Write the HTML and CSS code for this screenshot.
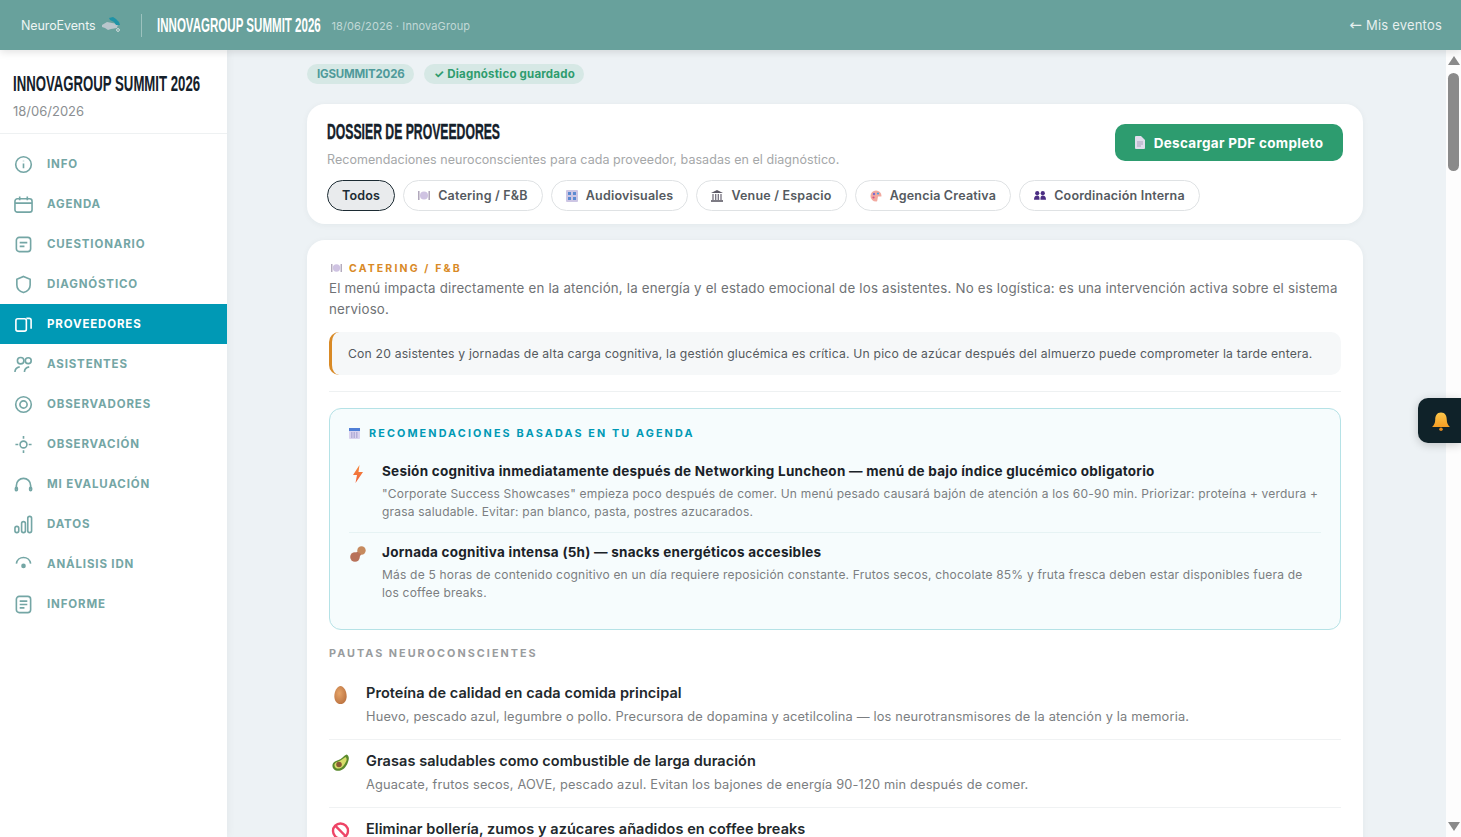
FILE: index.html
```html
<!DOCTYPE html>
<html>
<head>
  <meta charset="utf-8">
  <title>Dossier de proveedores</title>
  <link rel="stylesheet" href="styles.css">
</head>
<body>

  <!-- Top bar -->
  <header class="topbar">
    <div class="logo">
      <span class="logo-text">NeuroEvents</span>
      <svg class="logo-mark" width="20" height="16" viewBox="0 0 20 16"><path d="M1 8l5-3 5 1 6 1-1 4-6 1-3 1-3-2-3-1z" fill="#b9c6cc"/><path d="M8 1l4-1 3 2 3 3 1 3-4 0-2-3-4-2z" fill="#1f93a6"/><circle cx="17" cy="13" r="1.4" fill="none" stroke="#d5dfe0"/></svg>
    </div>
    <div class="topbar-sep"></div>
    <div class="topbar-title"><span>INNOVAGROUP SUMMIT 2026</span></div>
    <div class="topbar-sub">18/06/2026 · InnovaGroup</div>
    <a class="back-link"><span class="back-arrow">←</span> Mis eventos</a>
  </header>

  <div class="layout">
    <!-- Sidebar -->
    <aside class="sidebar">
      <div class="side-head">
        <div class="side-title"><span>INNOVAGROUP SUMMIT 2026</span></div>
        <div class="side-date">18/06/2026</div>
      </div>
      <nav>
        <a class="nav-item"><svg viewBox="0 0 20 20"><circle cx="10" cy="10" r="8.200"/><path d="M10 9v5M10 6v.6"/></svg>INFO</a>
        <a class="nav-item"><svg viewBox="0 0 20 20"><rect x="1" y="4" width="18" height="14" rx="2.500"/><path d="M1 8.500h18M6 1.500v4M14 1.500v4"/></svg>AGENDA</a>
        <a class="nav-item"><svg viewBox="0 0 20 20"><rect x="2.500" y="2.500" width="15" height="15" rx="3"/><path d="M6 8h8M6 12h5"/></svg>CUESTIONARIO</a>
        <a class="nav-item"><svg viewBox="0 0 20 20"><path d="M10 1.500l7 3v6c0 4-3 6.800-7 8-4-1.200-7-4-7-8v-6z"/></svg>DIAGNÓSTICO</a>
        <a class="nav-item active"><svg viewBox="0 0 20 20"><rect x="2" y="4" width="11" height="13" rx="2"/><path d="M13 3.500h3a2 2 0 0 1 2 2v9"/></svg>PROVEEDORES</a>
        <a class="nav-item"><svg viewBox="0 0 20 20"><circle cx="7" cy="6" r="3.400"/><circle cx="15" cy="6" r="3.100"/><path d="M1 18c0-3 2-5 5-5.500M11 18c0-3 1.500-5 5-5.500"/></svg>ASISTENTES</a>
        <a class="nav-item"><svg viewBox="0 0 20 20"><circle cx="10" cy="10" r="8.200"/><circle cx="10" cy="10" r="3.800"/></svg>OBSERVADORES</a>
        <a class="nav-item"><svg viewBox="0 0 20 20"><circle cx="10" cy="10" r="3.600"/><path d="M10 1v3M10 16v3M1.500 10h3M15.500 10h3"/></svg>OBSERVACIÓN</a>
        <a class="nav-item"><svg viewBox="0 0 20 20"><path d="M2.500 15v-4a7.500 7.500 0 0 1 15 0v4"/><rect x="1.500" y="13" width="2" height="3.500" rx="1"/><rect x="16.500" y="13" width="2" height="3.500" rx="1"/></svg>MI EVALUACIÓN</a>
        <a class="nav-item"><svg viewBox="0 0 20 20"><rect x="1" y="12" width="4" height="6.500" rx="2"/><rect x="8" y="7" width="4" height="11.500" rx="2"/><rect x="14.500" y="1.500" width="4" height="17" rx="2"/></svg>DATOS</a>
        <a class="nav-item"><svg viewBox="0 0 20 20"><path d="M2.500 9A7.600 7.600 0 0 1 17.500 9"/><circle class="dot" cx="10" cy="11.500" r="1.600"/></svg>ANÁLISIS IDN</a>
        <a class="nav-item"><svg viewBox="0 0 20 20"><rect x="2.500" y="1.500" width="15" height="17" rx="3"/><path d="M6 6.500h8M6 10h8M6 13.500h5"/></svg>INFORME</a>
      </nav>
    </aside>

    <!-- Main -->
    <main class="main">
      <div class="content">
        <div class="badges">
          <span class="badge code">IGSUMMIT2026</span>
          <span class="badge ok">✓ Diagnóstico guardado</span>
        </div>

        <section class="card head-card">
          <div class="head-row">
            <div>
              <h1><span>DOSSIER DE PROVEEDORES</span></h1>
              <p class="head-sub">Recomendaciones neuroconscientes para cada proveedor, basadas en el diagnóstico.</p>
            </div>
            <button class="pdf-btn">
              <svg width="10" height="13" viewBox="0 0 10 13"><path d="M0 1a1 1 0 0 1 1-1h5l4 4v8a1 1 0 0 1-1 1H1a1 1 0 0 1-1-1z" fill="#e0dcec"/><path d="M2 6h6M2 8h6M2 10h4" stroke="#a9a2bd"/></svg>
              Descargar PDF completo
            </button>
          </div>
          <div class="tabs">
            <button class="tab selected">Todos</button>
            <button class="tab"><svg width="12" height="11" viewBox="0 0 12 11"><circle cx="6" cy="5.500" r="4" fill="#cfc3e2"/><path d="M.8 1v9M11.200 1v9" stroke="#a99fb5" stroke-width="1.400"/></svg>Catering / F&amp;B</button>
            <button class="tab"><svg width="12" height="12" viewBox="0 0 12 12"><rect width="12" height="12" rx="1" fill="#cdc6e4"/><rect x="2" y="2" width="3" height="3" fill="#5c8ad1"/><rect x="7" y="2" width="3" height="3" fill="#5c8ad1"/><rect x="2" y="7" width="3" height="3" fill="#5c8ad1"/><rect x="7" y="7" width="3" height="3" fill="#5c8ad1"/></svg>Audiovisuales</button>
            <button class="tab"><svg width="12" height="12" viewBox="0 0 12 12"><path d="M6 0l6 3H0z" fill="#5d5a66"/><path d="M2 4v6M4.700 4v6M7.300 4v6M10 4v6" stroke="#76727f" stroke-width="1.300"/><path d="M0 11h12" stroke="#5d5a66" stroke-width="1.600"/></svg>Venue / Espacio</button>
            <button class="tab"><svg width="12" height="12" viewBox="0 0 12 12"><circle cx="6" cy="6" r="5.500" fill="#f2aaa0"/><circle cx="4" cy="4" r="1.200" fill="#7b6bd0"/><circle cx="3.500" cy="7.500" r="1.100" fill="#d94f82"/><circle cx="8" cy="3.500" r="1.100" fill="#4aa3df"/><path d="M8 6.500h4V12H7z" fill="#fff"/></svg>Agencia Creativa</button>
            <button class="tab"><svg width="12" height="11" viewBox="0 0 13 11"><g fill="#4b2e83"><circle cx="3.500" cy="3" r="2.300"/><circle cx="9.500" cy="3" r="2.300"/><path d="M0 10c0-3 1.500-4.500 3.500-4.500S6 7 6 10zM7 10c0-3 .5-4.500 2.500-4.500S13 7 13 10z"/></g></svg>Coordinación Interna</button>
          </div>
        </section>

        <section class="card body-card">
          <div class="cat-label"><svg width="11" height="10" viewBox="0 0 12 11"><circle cx="6" cy="5.500" r="4" fill="#cfc3e2"/><path d="M.8 1v9M11.200 1v9" stroke="#a99fb5" stroke-width="1.400"/></svg>CATERING / F&amp;B</div>
          <p class="cat-desc">El menú impacta directamente en la atención, la energía y el estado emocional de los asistentes. No es logística: es una intervención activa sobre el sistema nervioso.</p>
          <div class="callout">Con 20 asistentes y jornadas de alta carga cognitiva, la gestión glucémica es crítica. Un pico de azúcar después del almuerzo puede comprometer la tarde entera.</div>

          <div class="reco-box">
            <div class="reco-head"><svg width="11" height="11" viewBox="0 0 11 11"><rect width="11" height="11" rx="1" fill="#d9d2ee"/><rect width="11" height="3" fill="#4f7fd6"/><path d="M2 5h7M2 7h7M2 9h7" stroke="#8f8bc2" stroke-dasharray="1.500 1"/></svg>RECOMENDACIONES BASADAS EN TU AGENDA</div>
            <div class="reco-item">
              <svg class="emoji" width="16" height="18" viewBox="0 0 16 18"><defs><linearGradient id="bolt" x1="0" y1="0" x2="0" y2="1"><stop offset="0" stop-color="#f58a3c"/><stop offset="1" stop-color="#ef5f3a"/></linearGradient></defs><path d="M9.500 0L3 10h4l-1.500 8L13 7H8.500z" fill="url(#bolt)"/></svg>
              <div>
                <div class="item-title">Sesión cognitiva inmediatamente después de Networking Luncheon — menú de bajo índice glucémico obligatorio</div>
                <div class="item-text">"Corporate Success Showcases" empieza poco después de comer. Un menú pesado causará bajón de atención a los 60-90 min. Priorizar: proteína + verdura + grasa saludable. Evitar: pan blanco, pasta, postres azucarados.</div>
              </div>
            </div>
            <div class="reco-item">
              <svg class="emoji" width="16" height="16" viewBox="0 0 16 16"><circle cx="11.500" cy="4.500" r="4.200" fill="#c68a5e"/><circle cx="5" cy="11" r="4.800" fill="#b8725a"/><path d="M6 7l4 3" stroke="#b8725a" stroke-width="4"/></svg>
              <div>
                <div class="item-title">Jornada cognitiva intensa (5h) — snacks energéticos accesibles</div>
                <div class="item-text">Más de 5 horas de contenido cognitivo en un día requiere reposición constante. Frutos secos, chocolate 85% y fruta fresca deben estar disponibles fuera de los coffee breaks.</div>
              </div>
            </div>
          </div>

          <div class="section-label">PAUTAS NEUROCONSCIENTES</div>
          <div class="guide">
            <svg class="emoji" width="14" height="18" viewBox="0 0 16 19"><defs><radialGradient id="egg" cx="0.4" cy="0.4" r="0.7"><stop offset="0" stop-color="#e6a468"/><stop offset="1" stop-color="#b9703f"/></radialGradient></defs><path d="M8 0c3.500 0 6.500 5.500 6.500 10.500S12 19 8 19s-6.500-3.500-6.500-8.500S4.500 0 8 0z" fill="url(#egg)"/></svg>
            <div>
              <div class="guide-title">Proteína de calidad en cada comida principal</div>
              <div class="guide-text">Huevo, pescado azul, legumbre o pollo. Precursora de dopamina y acetilcolina — los neurotransmisores de la atención y la memoria.</div>
            </div>
          </div>
          <div class="guide">
            <svg class="emoji" width="18" height="18" viewBox="0 0 18 18"><path d="M15 .5c2.500 1 3 4 1.500 7.500-1 3-3 7-7.500 8.500C4 18 .5 14.500 1 11c.5-3 3-4 6-5 3-1 5-4 8-5.500z" fill="#5b8a2e"/><path d="M14 3c1.500 1 1.500 3.500 0 5.500-1 2.500-3 5-6 6-3 .5-5.500-1.500-5-4 .5-2 2.500-2.500 5-3.500 2.500-1 4-3 6-4z" fill="#d7dd6a"/><circle cx="7.500" cy="10.500" r="2.800" fill="#8a5a35"/></svg>
            <div>
              <div class="guide-title">Grasas saludables como combustible de larga duración</div>
              <div class="guide-text">Aguacate, frutos secos, AOVE, pescado azul. Evitan los bajones de energía 90-120 min después de comer.</div>
            </div>
          </div>
          <div class="guide">
            <svg class="emoji" width="18" height="18" viewBox="0 0 18 18"><circle cx="9" cy="9" r="7.500" fill="none" stroke="#ee4466" stroke-width="2.400"/><path d="M3.700 3.700l10.600 10.600" stroke="#ee4466" stroke-width="2.400"/></svg>
            <div>
              <div class="guide-title">Eliminar bollería, zumos y azúcares añadidos en coffee breaks</div>
            </div>
          </div>
        </section>
      </div>
    </main>

    <!-- Scrollbar -->
    <div class="scrollbar">
      <div class="arrow-up"></div>
      <div class="thumb"></div>
      <div class="track"></div>
      <div class="arrow-down"></div>
    </div>
  </div>

  <button class="bell-btn"><svg width="20" height="20" viewBox="0 0 18 18"><defs><linearGradient id="bell" x1="0" y1="0" x2="0" y2="1"><stop offset="0" stop-color="#fbc64a"/><stop offset="1" stop-color="#f59e24"/></linearGradient></defs><path d="M9 0.500c3.800 0 5.200 3 5.200 6.500 0 3 1 4.500 2.800 6.500H1C2.800 11.500 3.800 10 3.800 7 3.800 3.500 5.200 .5 9 .5z" fill="url(#bell)"/><circle cx="9" cy="15.500" r="1.600" fill="#e08a1e"/></svg></button>

</body>
</html>
```

FILE: styles.css
```css
* {
  box-sizing: border-box;
}
body {
  margin: 0;
  height: 837px;
  overflow: hidden;
  background: #edf2f5;
  color: #1a2228;
  font-family: Inter, "Liberation Sans", sans-serif;
}
.topbar-title span,
.side-title span,
h1 span {
  display: inline-block;
  white-space: nowrap;
  transform-origin: left center;
}
.topbar {
  position: relative;
  z-index: 3;
  display: flex;
  align-items: center;
  height: 50px;
  padding: 0 19px 0 21px;
  background: #68a19c;
  box-shadow: 0 2px 8px rgba(0, 0, 0, 0.12);
  color: #fff;
}
.logo {
  display: flex;
  align-items: center;
  gap: 5px;
}
.logo-text {
  font-size: 12.5px;
  letter-spacing: -0.1px;
  color: #eef5f4;
}
.topbar-sep {
  width: 1px;
  height: 23px;
  margin: 0 15px 0 20px;
  background: rgba(255, 255, 255, 0.35);
}
.topbar-title {
  width: 165px;
  font-family: "Liberation Sans", sans-serif;
  font-size: 19.5px;
  font-weight: 700;
}
.topbar-title span {
  transform: scaleX(0.592);
}
.topbar-sub {
  margin: 2px 0 0 10px;
  font-size: 11px;
  letter-spacing: 0.1px;
  color: rgba(255, 255, 255, 0.6);
}
.back-link {
  margin-left: auto;
  font-size: 13px;
  letter-spacing: 0.2px;
  color: rgba(255, 255, 255, 0.85);
}
.back-arrow {
  font-family: "DejaVu Sans", sans-serif;
  font-size: 15px;
  line-height: 1;
}
.layout {
  display: flex;
  height: 787px;
}
.sidebar {
  flex: 0 0 227px;
  min-width: 0;
  background: #fff;
  box-shadow: 2px 0 8px rgba(0, 0, 0, 0.04);
  z-index: 2;
}
.side-head {
  height: 84px;
  padding: 20px 13px 0;
  border-bottom: 1px solid #eef1f2;
}
.side-title {
  width: 187px;
  font-family: "Liberation Sans", sans-serif;
  font-size: 22.5px;
  font-weight: 700;
  line-height: 27px;
  color: #14202a;
}
.side-title span {
  transform: scaleX(0.586);
}
.side-date {
  margin-top: 5px;
  font-size: 13px;
  line-height: 18px;
  color: #8b8f92;
}
nav {
  padding-top: 10px;
}
.nav-item {
  display: flex;
  align-items: center;
  height: 40px;
  padding-left: 14px;
  gap: 14px;
  font-size: 11.5px;
  font-weight: 700;
  letter-spacing: 0.85px;
  color: #74a6a5;
}
.nav-item svg {
  flex: 0 0 19px;
  width: 19px;
  height: 19px;
  fill: none;
  stroke: #74a6a5;
  stroke-width: 1.7;
}
.nav-item .dot {
  fill: #74a6a5;
}
.nav-item.active {
  background: #0099b5;
  color: #fff;
}
.nav-item.active svg {
  stroke: #fff;
}
.main {
  flex: 1;
  min-width: 0;
  overflow: hidden;
}
.content {
  width: 1056px;
  margin-left: 80px;
  padding-top: 14px;
}
.badges {
  display: flex;
  gap: 10px;
  margin-bottom: 20px;
}
.badge {
  height: 20px;
  padding: 0 10px;
  border-radius: 10px;
  background: #d6e8e5;
  font-size: 11.5px;
  font-weight: 700;
  line-height: 20px;
  white-space: nowrap;
}
.badge.code {
  width: 107px;
  color: #4f9a9a;
  letter-spacing: -0.2px;
}
.badge.ok {
  width: 160px;
  color: #2e9c6e;
  letter-spacing: 0.2px;
}
.card {
  background: #fff;
  border-radius: 18px;
  box-shadow: 0 1px 6px rgba(20, 50, 60, 0.05);
}
.head-card {
  height: 120px;
  margin-bottom: 16px;
  padding: 20px 20px 0;
}
.head-row {
  display: flex;
  justify-content: space-between;
  align-items: flex-start;
  height: 56px;
}
h1 {
  width: 173px;
  margin: 0;
  font-family: "Liberation Sans", sans-serif;
  font-size: 22px;
  font-weight: 700;
  line-height: 16px;
  color: #14202a;
}
h1 span {
  transform: scaleX(0.555);
  -webkit-text-stroke: 0.4px #14202a;
}
.head-sub {
  margin: 11px 0 0;
  font-size: 12.5px;
  line-height: 18px;
  letter-spacing: 0.05px;
  color: #a5a7a9;
}
.pdf-btn {
  display: flex;
  align-items: center;
  justify-content: center;
  gap: 9px;
  width: 228px;
  height: 37px;
  border: none;
  border-radius: 10px;
  background: #2d9c6f;
  color: #fff;
  font-family: inherit;
  font-size: 13.5px;
  font-weight: 700;
  letter-spacing: 0.3px;
}
.tabs {
  display: flex;
  gap: 8px;
}
.tab {
  display: flex;
  align-items: center;
  gap: 8px;
  height: 31px;
  padding: 0 14px;
  border: 1px solid #dfe2e4;
  border-radius: 16px;
  background: #fff;
  color: #555a60;
  font-family: inherit;
  font-size: 12.5px;
  font-weight: 600;
  letter-spacing: 0.2px;
}
.tab.selected {
  background: #e9ebed;
  border-color: #1c2b33;
  color: #1c2b33;
}
.body-card {
  height: 640px;
  padding: 20px 22px 0;
}
.cat-label {
  display: flex;
  align-items: center;
  gap: 7px;
  height: 16px;
  padding-left: 2px;
  font-size: 10.5px;
  font-weight: 700;
  letter-spacing: 2.15px;
  color: #d98a26;
}
.cat-desc {
  margin: 2px 0 12px;
  font-size: 13.3px;
  line-height: 21px;
  letter-spacing: 0.19px;
  color: #6f7275;
}
.callout {
  height: 43px;
  padding-left: 16px;
  border-left: 3px solid #d98a26;
  border-radius: 10px;
  background: #f6f8f9;
  font-size: 12.2px;
  line-height: 43px;
  letter-spacing: 0.18px;
  color: #555a5e;
}
.reco-box {
  height: 222px;
  margin-top: 33px;
  padding: 17px 19px 0;
  border: 1px solid #b5e2e6;
  border-radius: 12px;
  background: #f6fcfd;
  position: relative;
}
.reco-box::before {
  content: "";
  position: absolute;
  left: -1px;
  right: -1px;
  top: -18px;
  border-top: 1px solid #eef1f2;
}
.reco-head {
  display: flex;
  align-items: center;
  gap: 9px;
  height: 14px;
  margin-bottom: 22px;
  font-size: 10.8px;
  font-weight: 700;
  letter-spacing: 2.12px;
  color: #0099b5;
}
.reco-item {
  display: flex;
  gap: 16px;
  padding: 0 0 11px;
}
.reco-item + .reco-item {
  padding-top: 10px;
  border-top: 1px solid #e6f3f4;
}
.reco-item .emoji {
  flex: 0 0 16px;
  margin-left: 1px;
  margin-top: 3px;
}
.item-title {
  font-size: 13.5px;
  font-weight: 700;
  line-height: 18px;
  letter-spacing: 0.25px;
  color: #1a2228;
}
.item-text {
  margin-top: 5px;
  font-size: 12px;
  line-height: 18px;
  letter-spacing: 0.2px;
  color: #7b7e81;
}
.section-label {
  margin-top: 17px;
  height: 14px;
  font-size: 10.8px;
  font-weight: 700;
  line-height: 14px;
  letter-spacing: 2.03px;
  color: #999c9e;
}
.guide {
  display: flex;
  gap: 15px;
  height: 68px;
  padding-top: 11px;
  border-bottom: 1px solid #f0f2f3;
}
.section-label + .guide {
  margin-top: 11px;
}
.guide .emoji {
  flex: 0 0 21px;
  margin-left: 1px;
  margin-top: 3px;
}
.guide-title {
  font-size: 14.5px;
  font-weight: 600;
  line-height: 20px;
  letter-spacing: 0.06px;
  color: #22282c;
}
.guide-text {
  margin-top: 5px;
  font-size: 12.8px;
  line-height: 18px;
  letter-spacing: 0.17px;
  color: #7b7e81;
}
.scrollbar {
  flex: 0 0 15px;
  display: flex;
  flex-direction: column;
  align-items: center;
  background: #fdfdfd;
}
.arrow-up {
  margin-top: 6px;
  border: 6px solid transparent;
  border-top: 0;
  border-bottom: 9px solid #8a8a8a;
}
.thumb {
  width: 11px;
  height: 98px;
  margin-top: 8px;
  border-radius: 6px;
  background: #8a8a8a;
}
.track {
  flex: 1;
}
.arrow-down {
  margin-bottom: 6px;
  border: 6px solid transparent;
  border-bottom: 0;
  border-top: 9px solid #8a8a8a;
}
.bell-btn {
  position: absolute;
  top: 398px;
  right: 0;
  z-index: 4;
  display: flex;
  align-items: center;
  justify-content: center;
  width: 43px;
  height: 45px;
  padding: 2px 0 0 2px;
  border: none;
  border-radius: 10px 0 0 10px;
  background: #0f2229;
  box-shadow: 0 2px 10px rgba(0, 0, 0, 0.2);
}
```
